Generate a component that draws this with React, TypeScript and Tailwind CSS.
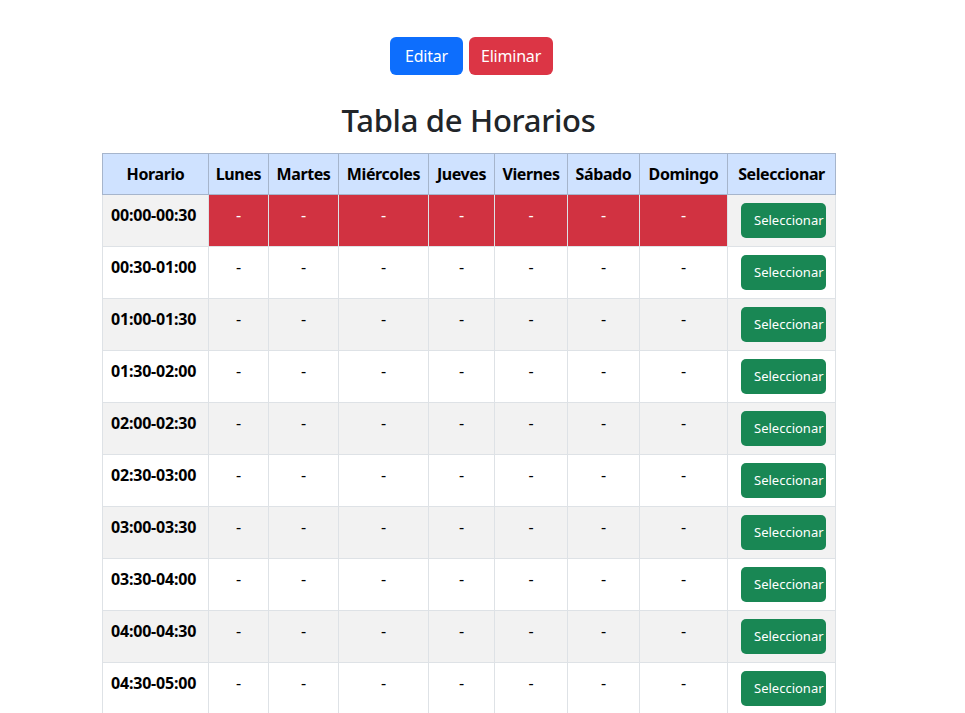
import React from "react";

const days = ["Lunes", "Martes", "Miércoles", "Jueves", "Viernes", "Sábado", "Domingo"];
const widths = ["w-[106px]", "w-[60px]", "w-[70px]", "w-[90px]", "w-[66px]", "w-[73px]", "w-[72px]", "w-[88px]", "w-[108px]"];

function pad(n: number) {
  return n.toString().padStart(2, "0");
}

const slots: string[] = [];
for (let i = 0; i < 48; i++) {
  const s = i * 30;
  const e = s + 30;
  const f = (m: number) => `${pad(Math.floor(m / 60) % 24)}:${pad(m % 60)}`;
  slots.push(`${f(s)}-${f(e)}`);
}

export default function App() {
  return (
    <div
      className="min-h-screen bg-white text-[#212529]"
      style={{ fontFamily: '"Segoe UI", "Noto Sans", sans-serif' }}
    >
      <div className="w-[733px] ml-[102px]">
        <div className="flex justify-center gap-[6px] pt-[37px] pl-[6px]">
          <button className="h-[38px] w-[73px] rounded-[6px] bg-[#0d6efd] text-white text-[16px] tracking-[-0.2px]">Editar</button>
          <button className="h-[38px] w-[84px] rounded-[6px] bg-[#dc3545] text-white text-[16px] tracking-[-0.2px]">Eliminar</button>
        </div>
        <h2 className="text-center text-[31px] font-medium leading-[38px] mt-[26px] mb-[14px] tracking-[-0.3px]">Tabla de Horarios</h2>
        <table className="table-fixed border-collapse w-[733px] text-[16px]">
          <thead>
            <tr className="bg-[#cfe2ff]">
              {["Horario", ...days, "Seleccionar"].map((h, i) => (
                <th
                  key={h}
                  className={`${widths[i]} border border-[#a6b5cc] px-[6px] py-[8px] leading-[24px] font-bold text-center text-black whitespace-nowrap tracking-[-0.4px]`}
                >
                  {h}
                </th>
              ))}
            </tr>
          </thead>
          <tbody>
            {slots.map((slot, r) => {
              const striped = r % 2 === 0;
              const bg = striped ? "bg-[#f2f2f2]" : "bg-white";
              return (
                <tr key={slot} className={bg}>
                  <td className="border border-[#dee2e6] px-[8px] py-[8px] leading-[24px] font-bold align-top text-black whitespace-nowrap tracking-[-0.2px]">
                    {slot}
                  </td>
                  {days.map((d) => (
                    <td
                      key={d}
                      className={`border border-[#dee2e6] px-[8px] py-[8px] leading-[24px] align-top text-center ${
                        r === 0 ? "bg-[#d13241] text-white" : "text-black"
                      }`}
                    >
                      -
                    </td>
                  ))}
                  <td className="border border-[#dee2e6] pl-[13px] py-[8px] align-top">
                    <button className="h-[35px] w-[85px] rounded-[5px] bg-[#198754] text-white text-[13px] text-left pl-[13px] whitespace-nowrap overflow-visible">
                      Seleccionar
                    </button>
                  </td>
                </tr>
              );
            })}
          </tbody>
        </table>
      </div>
    </div>
  );
}
